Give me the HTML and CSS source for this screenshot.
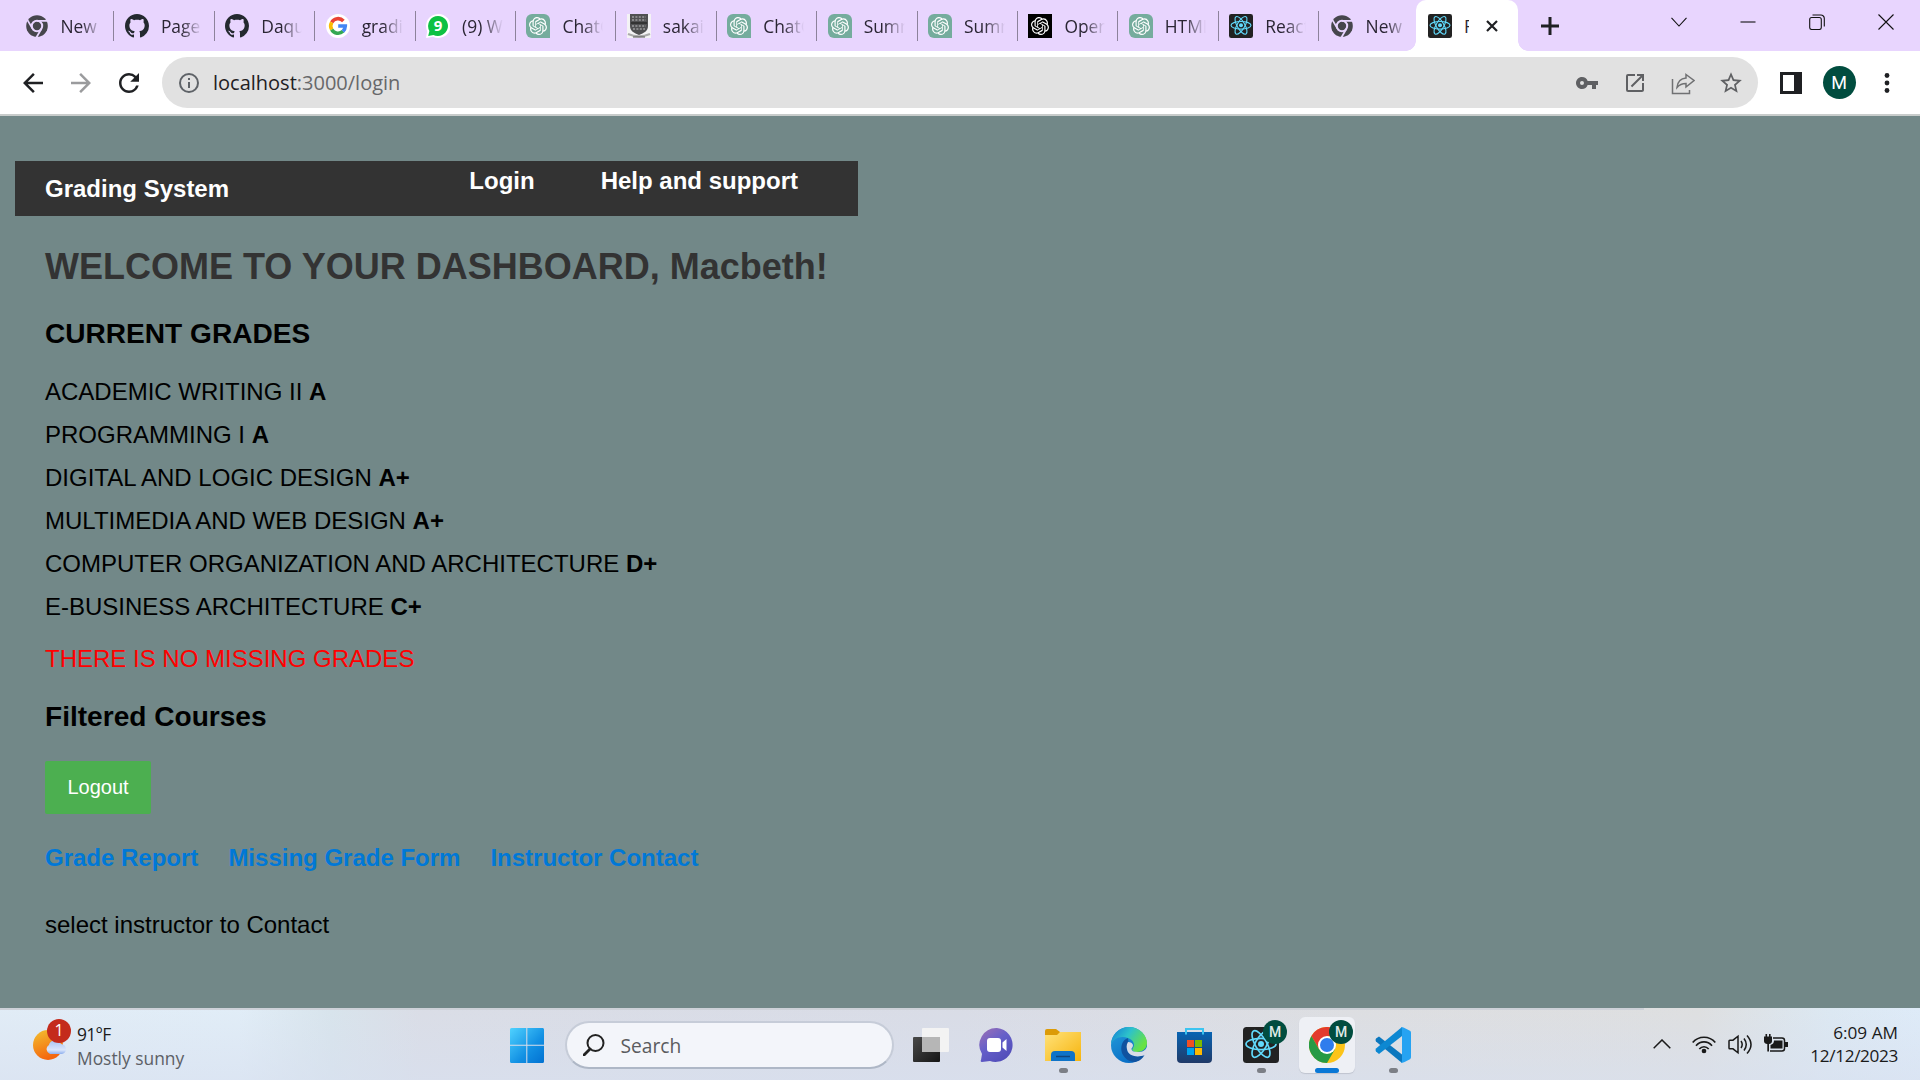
FILE: index.html
```html
<!DOCTYPE html>
<html lang="en">
<head>
<meta charset="utf-8">
<title>React App</title>
<link rel="stylesheet" href="styles.css">
</head>
<body>
<svg class="defs" aria-hidden="true">
  <symbol id="openai" viewBox="0 0 24 24"><path d="M22.2819 9.8211a5.9847 5.9847 0 0 0-.5157-4.9108 6.0462 6.0462 0 0 0-6.5098-2.9A6.0651 6.0651 0 0 0 4.9807 4.1818a5.9847 5.9847 0 0 0-3.9977 2.9 6.0462 6.0462 0 0 0 .7427 7.0966 5.98 5.98 0 0 0 .511 4.9107 6.051 6.051 0 0 0 6.5146 2.9001A5.9847 5.9847 0 0 0 13.2599 24a6.0557 6.0557 0 0 0 5.7718-4.2058 5.9894 5.9894 0 0 0 3.9977-2.9001 6.0557 6.0557 0 0 0-.7475-7.0729zm-9.022 12.6081a4.4755 4.4755 0 0 1-2.8764-1.0408l.1419-.0804 4.7783-2.7582a.7948.7948 0 0 0 .3927-.6813v-6.7369l2.02 1.1686a.071.071 0 0 1 .038.052v5.5826a4.504 4.504 0 0 1-4.4945 4.4944zm-9.6607-4.1254a4.4708 4.4708 0 0 1-.5346-3.0137l.142.0852 4.783 2.7582a.7712.7712 0 0 0 .7806 0l5.8428-3.3685v2.3324a.0804.0804 0 0 1-.0332.0615L9.74 19.9502a4.4992 4.4992 0 0 1-6.1408-1.6464zM2.3408 7.8956a4.485 4.485 0 0 1 2.3655-1.9728V11.6a.7664.7664 0 0 0 .3879.6765l5.8144 3.3543-2.0201 1.1685a.0757.0757 0 0 1-.071 0l-4.8303-2.7865A4.504 4.504 0 0 1 2.3408 7.872zm16.5963 3.8558L13.1038 8.364 15.1192 7.2a.0757.0757 0 0 1 .071 0l4.8303 2.7913a4.4944 4.4944 0 0 1-.6765 8.1042v-5.6772a.79.79 0 0 0-.407-.667zm2.0107-3.0231l-.142-.0852-4.7735-2.7818a.7759.7759 0 0 0-.7854 0L9.409 9.2297V6.8974a.0662.0662 0 0 1 .0284-.0615l4.8303-2.7866a4.4992 4.4992 0 0 1 6.6802 4.66zM8.3065 12.863l-2.02-1.1638a.0804.0804 0 0 1-.038-.0567V6.0742a4.4992 4.4992 0 0 1 7.3757-3.4537l-.142.0805L8.704 5.459a.7948.7948 0 0 0-.3927.6813zm1.0976-2.3654l2.602-1.4998 2.6069 1.4998v2.9994l-2.5974 1.4997-2.6067-1.4997Z"/></symbol>
  <symbol id="chatgpt" viewBox="0 0 24 24"><path fill="#75ac9d" d="M6 0h12a6 6 0 0 1 6 6v18H6a6 6 0 0 1-6-6V6a6 6 0 0 1 6-6z"/><use href="#openai" x="3" y="3" width="18" height="18" fill="#fff"/></symbol>
  <symbol id="github" viewBox="0 0 16 16"><path fill="#24292f" d="M8 0C3.58 0 0 3.58 0 8c0 3.54 2.29 6.53 5.47 7.59.4.07.55-.17.55-.38 0-.19-.01-.82-.01-1.49-2.01.37-2.53-.49-2.69-.94-.09-.23-.48-.94-.82-1.13-.28-.15-.68-.52-.01-.53.63-.01 1.08.58 1.23.82.72 1.21 1.87.87 2.33.66.07-.52.28-.87.51-1.07-1.78-.2-3.64-.89-3.64-3.95 0-.87.31-1.59.82-2.15-.08-.2-.36-1.02.08-2.12 0 0 .67-.21 2.2.82.64-.18 1.32-.27 2-.27s1.36.09 2 .27c1.53-1.04 2.2-.82 2.2-.82.44 1.1.16 1.92.08 2.12.51.56.82 1.27.82 2.15 0 3.07-1.87 3.75-3.65 3.95.29.25.54.73.54 1.48 0 1.07-.01 1.93-.01 2.2 0 .21.15.46.55.38A8.01 8.01 0 0 0 16 8c0-4.42-3.58-8-8-8z"/></symbol>
  <symbol id="chrome-gray" viewBox="0 0 24 24"><circle cx="12" cy="12" r="10.8" fill="#46464c"/><circle cx="12" cy="12" r="5.2" fill="none" stroke="#e8d5fe" stroke-width="2"/><path d="M12 6.8h10.5M7.5 14.6 2.2 5.6M16.5 14.6 11.4 23.5" stroke="#e8d5fe" stroke-width="1.8"/></symbol>
  <symbol id="react" viewBox="0 0 36 36"><rect width="36" height="36" rx="3.5" fill="#222"/><g fill="none" stroke="#61dafb" stroke-width="1.7"><ellipse cx="18" cy="17" rx="15" ry="5.7"/><ellipse cx="18" cy="17" rx="15" ry="5.7" transform="rotate(60 18 17)"/><ellipse cx="18" cy="17" rx="15" ry="5.7" transform="rotate(120 18 17)"/></g><circle cx="18" cy="17" r="3" fill="#61dafb"/></symbol>
</svg>

<header class="tabstrip">
  <div class="tabs">
    <div class="tab"><svg><use href="#chrome-gray"/></svg><span>New</span></div>
    <div class="tab"><svg><use href="#github"/></svg><span>Page</span></div>
    <div class="tab"><svg><use href="#github"/></svg><span>Daqu</span></div>
    <div class="tab"><svg viewBox="0 0 24 24"><circle cx="12" cy="12" r="12" fill="#fff"/><g fill="none" stroke-width="3.6"><path d="M5.7 8.4A7.3 7.3 0 0 1 17.4 7" stroke="#ea4335"/><path d="M5.7 15.7a7.3 7.3 0 0 1 0-7.3" stroke="#fbbc05"/><path d="M17 17.3a7.3 7.3 0 0 1-11.3-1.7" stroke="#34a853"/><path d="M12.2 12h7.1a7.4 7.4 0 0 1-2.4 5.3" stroke="#4285f4"/></g></svg><span>gradi</span></div>
    <div class="tab"><div class="whatsapp"><svg viewBox="0 0 24 24"><path fill="#fff" d="M12 0a12 12 0 1 1-5 22.7L0 24l1.2-6.8A12 12 0 0 1 12 0z"/><path fill="#0dc143" d="M12 2a10 10 0 1 1-4.6 18.9L2.2 22l1.2-5A10 10 0 0 1 12 2z"/></svg><b>9</b></div><span>(9) W</span></div>
    <div class="tab"><svg><use href="#chatgpt"/></svg><span>ChatG</span></div>
    <div class="tab"><svg viewBox="0 0 24 24"><path fill="#f4f3f5" d="M0 0h24v24H0z"/><path fill="#505052" d="M3 0h18v12c0 5-4 7-9 9-5-2-9-4-9-9z"/><path stroke="#9b9b9d" stroke-width="1.6" stroke-dasharray="2 1.4" d="M5 3h14M5 6h14M5 12h14M6 15h12"/><path stroke="#333" stroke-width="2" d="M4 9h16"/><path fill="none" stroke="#aaa" stroke-width="2" d="M1 20c7 3 15 3 22 0"/><path stroke="#555" d="M6 23h12"/></svg><span>sakai.</span></div>
    <div class="tab"><svg><use href="#chatgpt"/></svg><span>ChatG</span></div>
    <div class="tab"><svg><use href="#chatgpt"/></svg><span>Summ</span></div>
    <div class="tab"><svg><use href="#chatgpt"/></svg><span>Summ</span></div>
    <div class="tab"><svg viewBox="0 0 24 24"><path d="M0 0h24v24H0z"/><use href="#openai" x="3" y="3" width="18" height="18" fill="#fff"/></svg><span>Open</span></div>
    <div class="tab"><svg><use href="#chatgpt"/></svg><span>HTML</span></div>
    <div class="tab"><svg><use href="#react"/></svg><span>React</span></div>
    <div class="tab"><svg><use href="#chrome-gray"/></svg><span>New</span></div>
    <div class="tab active"><svg><use href="#react"/></svg><span>R</span><svg class="close" viewBox="0 0 12 12"><path d="M1 1l10 10M11 1L1 11" stroke="#1f2023" stroke-width="2.2"/></svg></div>
  </div>
  <svg class="newtab" viewBox="0 0 18 18"><path d="M9 0v18M0 9h18" stroke="#1f2023" stroke-width="3"/></svg>
  <div class="window-controls">
    <svg viewBox="0 0 16 16"><path d="M.5 3.8 8 12l7.5-8.2"/></svg>
    <svg viewBox="0 0 16 16"><path d="M.5 8h15"/></svg>
    <svg viewBox="0 0 16 16"><rect x=".7" y="3.5" width="11.6" height="12" rx="2"/><path d="M3.5 1h8.3a3.4 3.4 0 0 1 3.5 3.5v8"/></svg>
    <svg viewBox="0 0 16 16"><path d="M.5.5l15 15M15.500.5l-15 15"/></svg>
  </div>
</header>

<div class="toolbar">
  <div class="nav-icons">
    <svg viewBox="0 0 24 24" fill="#1f2023"><path d="M20 11H7.830l5.590-5.590L12 4l-8 8 8 8 1.410-1.410L7.830 13H20z"/></svg>
    <svg viewBox="0 0 24 24" fill="#9a9b9d"><path d="M12 4l-1.410 1.410L16.170 11H4v2h12.170l-5.580 5.590L12 20l8-8z"/></svg>
    <svg viewBox="0 0 24 24" fill="#1f2023"><path d="M17.650 6.350A7.958 7.958 0 0 0 12 4c-4.420 0-7.990 3.580-7.990 8s3.570 8 7.990 8c3.730 0 6.840-2.550 7.730-6h-2.080A5.990 5.990 0 0 1 12 18c-3.310 0-6-2.690-6-6s2.690-6 6-6c1.660 0 3.140.69 4.220 1.780L13 11h7V4z"/></svg>
  </div>
  <div class="address">
    <svg class="info" viewBox="0 0 24 24" fill="#5f6368"><path d="M11 7h2v2h-2zm0 4h2v6h-2zm1-9a10 10 0 1 0 0 20 10 10 0 0 0 0-20zm0 18a8 8 0 1 1 0-16 8 8 0 0 1 0 16z"/></svg>
    <span class="url"><b>localhost</b>:3000/login</span>
    <div class="actions">
      <svg viewBox="0 0 24 24" fill="#5f6063"><path d="M12.650 10A5.990 5.990 0 0 0 7 6c-3.310 0-6 2.690-6 6s2.690 6 6 6a5.990 5.990 0 0 0 5.650-4H17v4h4v-4h2v-4zM7 14a2 2 0 1 1 0-4 2 2 0 0 1 0 4z"/></svg>
      <svg viewBox="0 0 24 24" fill="#5f6063"><path d="M19 19H5V5h7V3H5a2 2 0 0 0-2 2v14a2 2 0 0 0 2 2h14c1.100 0 2-.9 2-2v-7h-2zM14 3v2h3.590l-9.830 9.830 1.410 1.410L19 6.410V10h2V3z"/></svg>
      <svg viewBox="0 0 24 24" fill="none" stroke="#707173" stroke-width="1.500"><path d="M1.500 8v14.500h17V19"/><path d="M15 3.500l8 6-8 6.500v-3.500c-4 0-6.500 1-9 4 .5-5.500 3.500-9 9-9.500z"/></svg>
      <svg class="star" viewBox="0 0 24 24" fill="#5f6063"><path d="M22 9.240l-7.190-.62L12 2 9.190 8.630 2 9.240l5.460 4.730L5.820 21 12 17.270 18.180 21l-1.630-7.030zM12 15.400l-3.760 2.270 1-4.280-3.320-2.880 4.380-.38L12 6.100l1.710 4.040 4.380.38-3.320 2.880 1 4.280z"/></svg>
    </div>
  </div>
  <div class="right-icons">
    <svg viewBox="0 0 22 22"><path fill="#1f2023" d="M0 0h22v22H0z"/><path fill="#fff" d="M3 3h11v16H3z"/></svg>
    <div class="avatar">M</div>
    <svg viewBox="0 0 22 22" fill="#1f2023"><circle cx="11" cy="3.500" r="2.400"/><circle cx="11" cy="11" r="2.400"/><circle cx="11" cy="18.500" r="2.400"/></svg>
  </div>
</div>

<main class="page">
  <div class="dashboard">
    <nav class="navbar">
      <span>Grading System</span>
      <div class="nav-links"><a>Login</a><a>Help and support</a></div>
    </nav>
    <div class="content">
      <h1>WELCOME TO YOUR DASHBOARD, Macbeth!</h1>
      <h3>CURRENT GRADES</h3>
      <ul class="grades">
        <li>ACADEMIC WRITING II <b>A</b></li>
        <li>PROGRAMMING I <b>A</b></li>
        <li>DIGITAL AND LOGIC DESIGN <b>A+</b></li>
        <li>MULTIMEDIA AND WEB DESIGN <b>A+</b></li>
        <li>COMPUTER ORGANIZATION AND ARCHITECTURE <b>D+</b></li>
        <li>E-BUSINESS ARCHITECTURE <b>C+</b></li>
      </ul>
      <p class="missing">THERE IS NO MISSING GRADES</p>
      <h3>Filtered Courses</h3>
      <button class="logout">Logout</button>
      <div class="links"><a>Grade Report</a><a>Missing Grade Form</a><a>Instructor Contact</a></div>
      <p class="contact">select instructor to Contact</p>
    </div>
  </div>
</main>

<footer class="taskbar">
  <div class="weather">
    <div class="weather-icon">
      <svg viewBox="0 0 38 42"><defs><linearGradient id="sun" x1="0" y1="0" x2=".4" y2="1"><stop offset="0" stop-color="#f3c130"/><stop offset="1" stop-color="#f4660f"/></linearGradient><linearGradient id="cloud" x1="0" y1="0" x2="0" y2="1"><stop offset="0" stop-color="#a9c3f2"/><stop offset=".7" stop-color="#dbe6fb"/><stop offset="1" stop-color="#8fb0ee"/></linearGradient></defs><circle cx="15" cy="21" r="15" fill="url(#sun)"/><path fill="url(#cloud)" d="M17 30a5 5 0 0 1-1-9c1-5 9-7 12-1 6 0 7 9 1 10z"/></svg>
      <b>1</b>
    </div>
    <div class="weather-text"><span>91°F</span><em>Mostly sunny</em></div>
  </div>

  <div class="apps">
    <div class="app"><svg viewBox="0 0 36 36"><defs><linearGradient id="win" x1="0" y1="0" x2="1" y2="1"><stop offset="0" stop-color="#4fd2ff"/><stop offset=".6" stop-color="#1290e3"/><stop offset="1" stop-color="#0271d1"/></linearGradient></defs><path fill="url(#win)" d="M2.500 1H17.300v16.800H1V2.500Q1 1 2.500 1zM18.300 1h15.500Q35 1 35 2.500v15.300H18.300zM1 18.800h16.300V36H2.500Q1 36 1 34.500zM18.300 18.800H35v15.700q0 1.500-1.500 1.500H18.300z"/></svg></div>
    <div class="search"><svg viewBox="0 0 22 22"><circle cx="12.500" cy="9" r="8" fill="none" stroke="#222" stroke-width="2"/><path d="M7 15l-6 6" stroke="#222" stroke-width="2.800" stroke-linecap="round"/></svg><span>Search</span></div>
    <div class="app"><svg viewBox="0 0 36 36"><defs><linearGradient id="tvd" x1="0" y1="0" x2="1" y2="1"><stop offset="0" stop-color="#494949"/><stop offset="1" stop-color="#151515"/></linearGradient></defs><rect y="10" width="27" height="25" rx="1" fill="url(#tvd)"/><rect x="9" y="1" width="27" height="24" rx="1" fill="#f3f3f3"/><path fill="#b6b6b6" d="M9 10h18v15H9z"/></svg></div>
    <div class="app"><svg viewBox="0 0 36 36"><defs><linearGradient id="chat" x1="0" y1="0" x2=".7" y2="1"><stop offset="0" stop-color="#a071b4"/><stop offset=".5" stop-color="#655fc9"/><stop offset="1" stop-color="#514db9"/></linearGradient></defs><path fill="url(#chat)" d="M18 1a17 17 0 1 1-7 33l-8 1q-2 0-1-2l1-6A17 17 0 0 1 18 1z"/><rect x="8" y="11" width="14" height="14" rx="3" fill="#fff"/><path fill="#fff" d="M23.500 15.500l4-3.500v12l-4-3.500z"/></svg></div>
    <div class="app"><svg viewBox="0 0 36 36"><defs><linearGradient id="fold" x1="0" y1="0" x2="1" y2="1"><stop offset="0" stop-color="#ffe27a"/><stop offset="1" stop-color="#f6b40e"/></linearGradient></defs><path fill="#dc9b07" d="M0 4q0-2 2-2h9l4 3v4H0z"/><path fill="url(#fold)" d="M0 8h12l3-3h21v29H0z"/><path fill="#0e73c8" d="M6 34V28q0-4 4-4h16q4 0 4 4v6z"/><path stroke="#10457c" stroke-width="1.500" d="M11 29.500h14"/></svg><i></i></div>
    <div class="app"><svg viewBox="0 0 36 36"><defs><linearGradient id="edg" x1="0" y1="0" x2="1" y2=".5"><stop offset=".1" stop-color="#1688d4"/><stop offset=".5" stop-color="#2dc2cb"/><stop offset="1" stop-color="#68e244"/></linearGradient><linearGradient id="edb" x1="0" y1="0" x2=".6" y2="1"><stop offset="0" stop-color="#249edb"/><stop offset="1" stop-color="#086bc4"/></linearGradient></defs><circle cx="18" cy="18" r="18" fill="url(#edb)"/><path fill="url(#edg)" d="M0 18C0 8 8 0 18 0c10.500 0 18 8 18 16 0 6-5 9-10 9-4 0-6-2-4-4 2-3 1-8-5-10C9 8 2 12 0 18z"/><path fill="#10529f" d="M17 11C11 13 9 20 11 26c2 5 7 9 13 9 5-1 8-4 9.500-7-7 3-15 1-17-4-1-3-1-6 1-8z"/><path fill="#d8dce7" d="M17 15q4 0 5 3 0 2-1.500 3.500Q20 25 27 25c4 0 7-1 9-5v7l-2.500 1c-7 3-15 1-17-4-1-3-1.500-6 .5-9z"/></svg></div>
    <div class="app"><svg viewBox="0 0 36 36"><defs><linearGradient id="store" x1="0" y1="0" x2="0" y2="1"><stop offset="0" stop-color="#0864b3"/><stop offset="1" stop-color="#203a68"/></linearGradient></defs><path fill="none" stroke="#3cc4f0" stroke-width="2" d="M9 7V2h17v5"/><path fill="url(#store)" d="M0 5h35v27q0 4-4 4H4q-4 0-4-4z"/><path stroke="#3cc4f0" stroke-width="2" d="M9 4v3.500M26 4v3.500"/><path fill="#f25022" d="M10 13h7v7h-7z"/><path fill="#7fba00" d="M18 13h7v7h-7z"/><path fill="#00a4ef" d="M10 21h7v7h-7z"/><path fill="#ffb900" d="M18 21h7v7h-7z"/></svg></div>
    <div class="app"><svg><use href="#react"/></svg><b>M</b><i></i></div>
    <div class="app current"><svg viewBox="0 0 36 36"><circle cx="18" cy="18" r="18" fill="#fcc419"/><path fill="#e33b2e" d="M2.400 9A18 18 0 0 1 33.600 9H18v9l-7.800 4.500z"/><path fill="#269a45" d="M2.400 9A18 18 0 0 0 18 36l7.800-13.500L18 18l-7.800 4.500z"/><circle cx="18" cy="18" r="9" fill="#fff"/><circle cx="18" cy="18" r="7" fill="#2f7ded"/></svg><b>M</b><i></i></div>
    <div class="app"><svg viewBox="0 0 36 36"><path fill="#0b77be" d="M1 11.500l3-2 23 18V36L1 14.500Q0 13 1 11.500z"/><path fill="#0d88d2" d="M1 24.500l3 2.500L27 9V0L1 21.500Q0 23 1 24.500z"/><path fill="#26a3f2" d="M26 0q2 0 3 .8l6 3q1 .7 1 2v24.500q0 1.200-1 2l-6 2.900Q27.500 36 26 36q1-1 1-3V3q0-2-1-3z"/></svg><i></i></div>
  </div>

  <div class="tray">
    <svg class="caret" viewBox="0 0 18 10"><path d="M.7 9.300L9 1l8.300 8.300" fill="none" stroke="#1a1a1a" stroke-width="1.500"/></svg>
    <svg viewBox="0 0 24 24" fill="none" stroke="#1a1a1a" stroke-width="1.700"><path d="M.7 10.500c6-7 16.600-7 22.600 0M4 13.700c4.500-5 11.500-5 16 0M7.300 17c2.700-3 6.700-3 9.400 0"/><circle cx="12" cy="19" r="1.500" fill="#1a1a1a"/></svg>
    <svg viewBox="0 0 24 24" fill="none" stroke="#1a1a1a" stroke-width="1.500"><path d="M1 9v7q0 .8.800.8H5l5 4V4.200l-5 4H1.800Q1 8.200 1 9zM13 9q2.400 3.500 0 7M16 6.500q4.500 6 0 12M19 3.500q8 9 0 18"/></svg>
    <svg viewBox="0 0 24 24" fill="none" stroke="#1a1a1a"><path stroke-width="1.500" d="M9 6h9q2.500 0 2.500 2.500v8q0 2.500-2.500 2.500H6"/><path fill="#1a1a1a" stroke="none" d="M10 8.500h8.500v8H6.500V13q3.500-1 3.500-4.500zM21 10h3v5h-3zM0 4.500h8V9q0 2.500-3 3v7.500H3.300V12Q0 11.500 0 9z"/><path stroke-width="1.600" d="M2.300 2v4M5.800 2v4"/></svg>
    <div class="clock"><span>6:09 AM</span><span>12/12/2023</span></div>
  </div>
</footer>
</body>
</html>
```
FILE: styles.css
```css
* { box-sizing: border-box; }
body {
  margin: 0;
  width: 1920px;
  height: 1080px;
  overflow: hidden;
  display: flex;
  flex-direction: column;
  font-family: "Open Sans", "Noto Sans", sans-serif;
  background: #728888;
}
.defs { position: absolute; width: 0; height: 0; }
svg { display: block; flex: none; }

/* Tab strip */
.tabstrip {
  flex: none;
  height: 51px;
  display: flex;
  background: #e8d5fe;
  padding-left: 13px;
}
.tabs { display: grid; grid-template-columns: repeat(15, 100.4px); }
.tab {
  position: relative;
  display: flex;
  align-items: center;
  gap: 12px;
  padding: 1px 0 0 11.5px;
  font-size: 17.4px;
  line-height: 26px;
  color: #2a2533;
}
.tab svg { width: 24px; height: 24px; }
.tab span {
  width: 41px;
  overflow: hidden;
  white-space: nowrap;
  -webkit-mask-image: linear-gradient(90deg, #000 50%, transparent 100%);
  mask-image: linear-gradient(90deg, #000 50%, transparent 100%);
}
.tab:not(:first-child):not(.active)::before {
  content: "";
  position: absolute;
  left: 0;
  top: 11px;
  width: 1px;
  height: 30px;
  background: #8d829b;
}
.whatsapp { position: relative; flex: none; }
.whatsapp b {
  position: absolute;
  inset: 0;
  text-align: center;
  font-size: 15px;
  line-height: 23px;
  color: #fff;
}
.tab.active { background: #fff; border-radius: 10px 10px 0 0; margin: 0 1px 0 -2px; }
.tab.active span {
  width: 5px;
  -webkit-mask-image: none;
  mask-image: none;
}
.tab.active .close { width: 12px; height: 12px; margin-left: 5px; }
.tab.active::before, .tab.active::after {
  content: "";
  position: absolute;
  bottom: 0;
  width: 10px;
  height: 10px;
}
.tab.active::before { left: -10px; background: radial-gradient(circle at 0 0, transparent 9.5px, #fff 10px); }
.tab.active::after { right: -10px; background: radial-gradient(circle at 100% 0, transparent 9.5px, #fff 10px); }
.newtab { width: 18px; height: 18px; margin: 17px 0 0 22px; }
.window-controls {
  margin-left: auto;
  height: 43px;
  display: grid;
  grid-template-columns: repeat(4, 69px);
  place-items: center;
}
.window-controls svg { width: 16px; height: 16px; fill: none; stroke: #111; stroke-width: 1.1; }

/* Toolbar */
.toolbar {
  flex: none;
  height: 65px;
  display: flex;
  align-items: center;
  background: #fff;
  border-bottom: 2px solid #c8cccb;
  padding-left: 9px;
}
.nav-icons { display: grid; grid-template-columns: repeat(3, 48px); place-items: center; }
.nav-icons svg { width: 30px; height: 30px; }
.address {
  width: 1596px;
  height: 51px;
  margin-left: 9px;
  border-radius: 26px;
  background: #e1e1e1;
  display: flex;
  align-items: center;
  padding: 0 3px 0 15px;
}
.info { width: 24px; height: 24px; }
.url { font-size: 20px; line-height: 28px; margin-left: 12px; color: #67686a; }
.url b { font-weight: 400; color: #1f2023; }
.actions { margin-left: auto; display: grid; grid-template-columns: repeat(4, 48px); place-items: center; }
.actions svg { width: 24px; height: 24px; }
.actions .star { width: 26px; height: 26px; }
.right-icons { display: grid; grid-template-columns: repeat(3, 48px); place-items: center; margin-left: 9px; }
.right-icons svg { width: 22px; height: 22px; }
.avatar {
  width: 33px;
  height: 33px;
  border-radius: 50%;
  background: #014d3f;
  color: #fff;
  font: 18px/33px Roboto, sans-serif;
  text-align: center;
}

/* Web page */
.page {
  flex: 1;
  padding: 45px 0 0 15px;
  font: 24px/28px "Liberation Sans", Arial, sans-serif;
  color: #000;
}
.dashboard { width: 843px; }
.navbar {
  height: 55px;
  display: flex;
  justify-content: space-between;
  background: #333;
  color: #fff;
  font-weight: 700;
  padding: 6px 60px 0 30px;
}
.navbar > span { padding-top: 8px; }
.nav-links { display: flex; gap: 66px; }
.content { padding: 30px 30px 0; }
h1 { margin: 0 0 30px; font-size: 36px; line-height: 42px; color: #333; white-space: nowrap; }
h3 { margin: 0; font-size: 28.08px; line-height: 32px; }
.grades {
  list-style: none;
  margin: 28px 0 24px;
  padding: 0;
  display: flex;
  flex-direction: column;
  gap: 15px;
}
.missing { margin: 0 0 28px; color: #f00; }
.logout {
  display: block;
  width: 106px;
  height: 53px;
  margin: 28px 0 30px;
  padding: 0;
  border: 0;
  border-radius: 2px;
  background: #4caf50;
  color: #fff;
  font: 20px "Liberation Sans", Arial, sans-serif;
}
.links { display: flex; gap: 30px; font-weight: 700; color: #0078d7; }
.contact { margin: 39px 0 0; }

/* Taskbar */
.taskbar {
  flex: none;
  height: 72px;
  display: grid;
  grid-template-columns: 494px 932px 494px;
  align-items: center;
  padding-top: 2px;
  background:
    linear-gradient(#cdd1d8, #cdd1d8) 0 0 / 1644px 2px no-repeat,
    linear-gradient(rgba(216, 224, 240, 0), rgba(216, 224, 240, .6)),
    linear-gradient(90deg, #e1ecf6 0, #e1edf7 240px, #d8e4ec 330px, #dadde6 420px, #d9dce6 960px, #dddee1 1350px, #dedfe0 1700px, #dce8f2 1830px, #deebf8 1920px);
}
.weather { display: flex; align-items: center; padding-left: 33px; gap: 6px; }
.weather-icon { position: relative; width: 38px; height: 42px; }
.weather-icon svg { width: 38px; height: 42px; }
.weather-icon b {
  position: absolute;
  right: 0;
  top: -5px;
  width: 24px;
  height: 24px;
  border-radius: 50%;
  background: #c42b1c;
  color: #fff;
  font-size: 16px;
  font-weight: 400;
  line-height: 23px;
  text-align: center;
}
.weather-text { display: flex; flex-direction: column; font-size: 17.4px; line-height: 24px; color: #1b1b1b; padding-top: 1px; }
.weather-text span { letter-spacing: -.7px; }
.weather-text em { font-style: normal; color: #5c6066; }
.apps { display: grid; grid-template-columns: 66px 338px repeat(8, 66px); place-items: center; }
.app {
  position: relative;
  width: 56px;
  height: 58px;
  border-radius: 6px;
  display: grid;
  place-items: center;
}
.app svg { width: 36px; height: 36px; }
.app i {
  position: absolute;
  bottom: 1px;
  left: 24px;
  width: 9px;
  height: 5px;
  border-radius: 3px;
  background: #7c7f86;
}
.app b {
  position: absolute;
  right: 2px;
  top: 4px;
  width: 24px;
  height: 24px;
  border-radius: 50%;
  background: #014d3f;
  color: #dfe9e6;
  font: 500 14px/24px Roboto, sans-serif;
  text-align: center;
}
.app.current { background: #eef0f5; box-shadow: 0 1px 1px #bfc4cf; height: 56px; }
.app.current b { top: 3px; }
.app.current i { left: 16px; bottom: 0; width: 24px; background: #0a78d6; }
.search {
  width: 329px;
  height: 48px;
  border: 2px solid #c6ccd8;
  border-bottom-color: #aeb7c6;
  border-radius: 24px;
  background: #f3f5fa;
  display: flex;
  align-items: center;
  gap: 16px;
  padding-left: 16px;
  font-size: 19.2px;
  color: #5a5b5e;
}
.search svg { width: 22px; height: 22px; }
.tray { display: flex; align-items: center; justify-content: flex-end; gap: 12px; padding: 0 22px 2px 0; }
.tray svg { width: 24px; height: 24px; }
.tray .caret { width: 18px; height: 10px; margin-right: 9px; }
.clock {
  width: 98px;
  display: flex;
  flex-direction: column;
  text-align: right;
  font-size: 17.2px;
  line-height: 23px;
  color: #1a1a1a;
}
.clock span:last-child { letter-spacing: -.35px; }
```
